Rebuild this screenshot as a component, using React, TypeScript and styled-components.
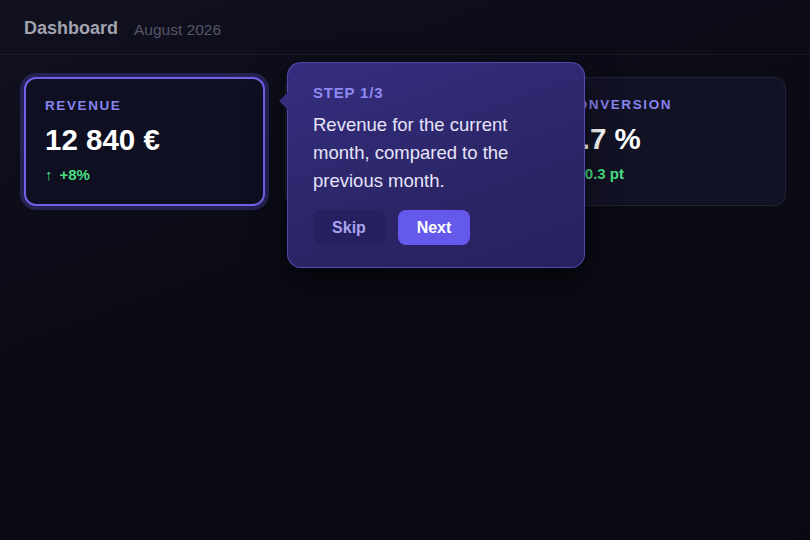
import React from 'react';
import styled, { createGlobalStyle } from 'styled-components';

const GlobalStyle = createGlobalStyle`
  html, body {
    margin: 0;
    padding: 0;
    background: #0a0b14;
  }
  body {
    font-family: "Liberation Sans", Arial, sans-serif;
    -webkit-font-smoothing: antialiased;
  }
`;

const Page = styled.div`
  width: 810px;
  height: 540px;
  background: linear-gradient(160deg, #10101f 0%, #0b0b16 45%, #090a11 100%);
  overflow: hidden;
`;

const Header = styled.header`
  height: 55px;
  display: flex;
  align-items: center;
  gap: 16px;
  padding: 3px 24px 0;
  border-bottom: 1px solid rgba(255, 255, 255, 0.06);
  box-sizing: border-box;
`;

const Title = styled.h1`
  margin: 0;
  font-size: 18px;
  font-weight: 700;
  color: #a3a3b0;
`;

const Subtitle = styled.span`
  font-size: 15.5px;
  color: #55566a;
  margin-top: 2px;
`;

const Grid = styled.main`
  display: grid;
  grid-template-columns: repeat(3, 1fr);
  gap: 20px;
  padding: 22px 24px;
  position: relative;
`;

const Card = styled.div<{ $active?: boolean }>`
  display: flex;
  flex-direction: column;
  gap: 8px;
  height: 129px;
  box-sizing: border-box;
  padding: 19px 19px;
  border-radius: 12px;
  background: ${p => (p.$active ? '#0f0f22' : '#121225')};
  border: ${p => (p.$active ? '2px solid #6e62e6' : '1px solid rgba(255,255,255,0.07)')};
  box-shadow: ${p => (p.$active ? '0 0 0 4px rgba(100, 88, 230, 0.28)' : 'none')};
`;

const Label = styled.div`
  font-size: 13.5px;
  line-height: 16px;
  font-weight: 700;
  letter-spacing: 1.6px;
  color: #8983ee;
  text-transform: uppercase;
`;

const Value = styled.div`
  font-size: 29.5px;
  line-height: 36px;
  font-weight: 700;
  color: #ffffff;
`;

const Delta = styled.div`
  font-size: 15px;
  line-height: 18px;
  font-weight: 700;
  color: #4ade80;
`;

const Arrow = styled.span`
  font-weight: 400;
  margin-right: 7px;
`;

const Tooltip = styled.div`
  position: absolute;
  left: 287px;
  top: 7px;
  width: 298px;
  box-sizing: border-box;
  padding: 21px 25px 22px;
  border-radius: 14px;
  background: linear-gradient(160deg, #352e80 0%, #2c2669 55%, #27215f 100%);
  border: 1px solid rgba(118, 106, 235, 0.5);
  box-shadow: 0 14px 34px rgba(0, 0, 0, 0.55);
  z-index: 2;

  &::before {
    content: '';
    position: absolute;
    left: -9px;
    top: 29px;
    width: 0;
    height: 0;
    border-top: 9px solid transparent;
    border-bottom: 9px solid transparent;
    border-right: 9px solid #342d7e;
  }
`;

const Step = styled.div`
  font-size: 15px;
  line-height: 18px;
  font-weight: 700;
  letter-spacing: 0.8px;
  color: #8f88f2;
`;

const Body = styled.p`
  margin: 9px 0 15px;
  max-width: 234px;
  font-size: 18.5px;
  line-height: 28px;
  color: #e6e4f7;
`;

const Actions = styled.div`
  display: flex;
  gap: 13px;
`;

const Button = styled.button<{ $primary?: boolean }>`
  height: 35px;
  width: 72px;
  padding: 0;
  border: none;
  border-radius: 8px;
  font-family: inherit;
  font-size: 16px;
  font-weight: 700;
  cursor: pointer;
  background: ${p => (p.$primary ? '#6459ea' : 'rgba(30, 26, 82, 0.4)')};
  color: ${p => (p.$primary ? '#ffffff' : '#a9a3ef')};
`;

export default function App() {
  return (
    <>
      <GlobalStyle />
      <Page>
        <Header>
          <Title>Dashboard</Title>
          <Subtitle>August 2026</Subtitle>
        </Header>
        <Grid>
          <Card $active>
            <Label>Revenue</Label>
            <Value>12 840 €</Value>
            <Delta><Arrow>↑</Arrow>+8%</Delta>
          </Card>
          <Card>
            <Label>Orders</Label>
            <Value>312</Value>
            <Delta><Arrow>↑</Arrow>+4%</Delta>
          </Card>
          <Card>
            <Label>Conversion</Label>
            <Value>3.7 %</Value>
            <Delta><Arrow>↓</Arrow>-0.3 pt</Delta>
          </Card>
          <Tooltip>
            <Step>STEP 1/3</Step>
            <Body>Revenue for the current month, compared to the previous month.</Body>
            <Actions>
              <Button>Skip</Button>
              <Button $primary>Next</Button>
            </Actions>
          </Tooltip>
        </Grid>
      </Page>
    </>
  );
}
